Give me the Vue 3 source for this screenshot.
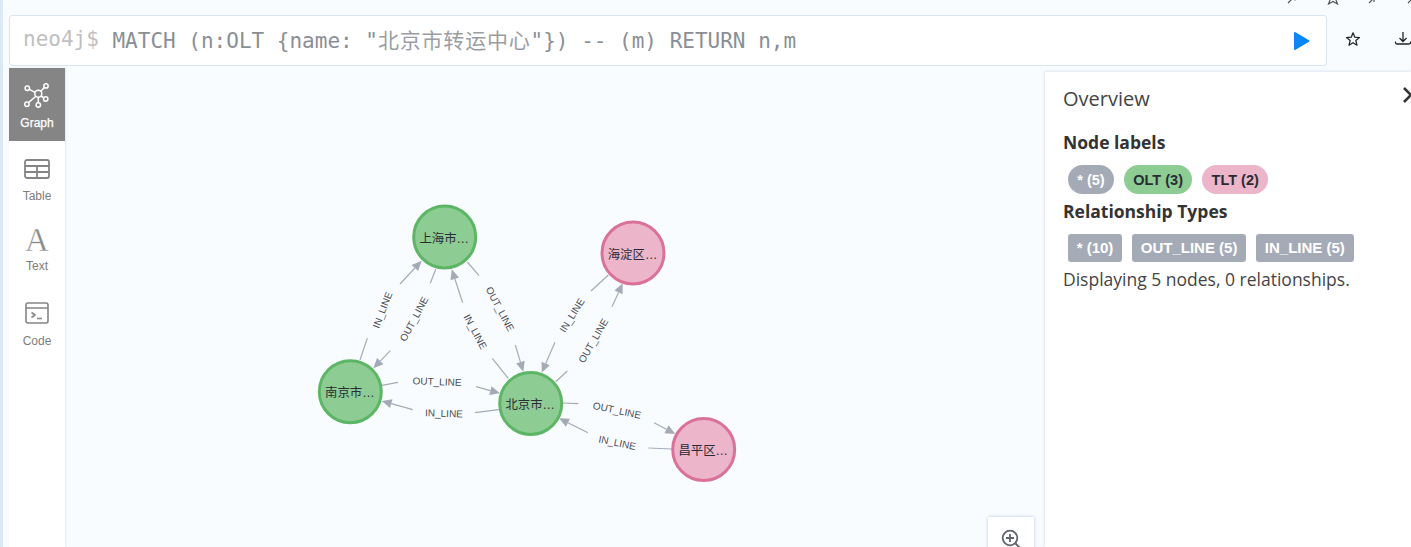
<template>
  <div class="page">
    <div class="corner-icons">
      <svg v-for="(d, i) in cornerIcons" :key="i" width="16" height="16" viewBox="0 0 16 16" :class="'corner-' + i">
        <path :d="d" fill="none" stroke="#555" stroke-width="1.2" />
      </svg>
    </div>

    <div class="top-row">
      <div class="editor">
        <span class="prompt">neo4j$</span>
        <span class="query">MATCH (n:OLT {name: "<span class="cjk">北京市转运中心</span>"}) -- (m) RETURN n,m</span>
        <svg class="run" width="18" height="20" viewBox="0 0 18 20">
          <path d="M2 2 L15.5 10 L2 18 Z" fill="#0b86f5" stroke="#0b86f5" stroke-width="2" stroke-linejoin="round" />
        </svg>
      </div>
      <div class="top-actions">
        <svg width="16" height="16" viewBox="0 0 18 18">
          <path d="M9 2 L11 7 L16.3 7.4 L12.2 10.8 L13.5 16 L9 13.2 L4.5 16 L5.8 10.8 L1.7 7.4 L7 7 Z" fill="none" stroke="#222" stroke-width="1.4" stroke-linejoin="round" />
        </svg>
        <svg width="18" height="16" viewBox="0 0 18 16">
          <path d="M9 1 V10 M5.5 7 L9 10.5 L12.5 7 M1.5 10.5 V11.5 Q1.5 13 3 13 H15 Q16.5 13 16.5 11.5 V10.5" fill="none" stroke="#222" stroke-width="1.3" />
        </svg>
      </div>
    </div>

    <div class="main">
      <nav class="sidebar">
        <div class="tab active">
          <svg width="26" height="26" viewBox="0 0 26 26" fill="none" stroke="#fff" stroke-width="1.5">
            <circle cx="14.3" cy="10.8" r="3.5" />
            <circle cx="3.3" cy="5.3" r="2.2" />
            <circle cx="22" cy="2.9" r="2.2" />
            <circle cx="21.7" cy="16" r="2.2" />
            <circle cx="2.9" cy="21.3" r="2.2" />
            <circle cx="14.3" cy="22" r="2.2" />
            <path d="M5.3 6.3 L11.1 9.3 M20.4 4.5 L16.8 8.3 M20 14.8 L17 13 M4.4 19.6 L11.9 13.3 M14.3 14.3 V19.8" />
          </svg>
          <span>Graph</span>
        </div>
        <div class="tab table-tab">
          <svg width="26" height="20" viewBox="0 0 26 20" fill="none" stroke="#858585" stroke-width="1.8">
            <rect x="1" y="1" width="24" height="18" rx="2" />
            <path d="M1 7 H25 M1 13 H25 M13 7 V19" />
          </svg>
          <span>Table</span>
        </div>
        <div class="tab text-tab">
          <i class="glyph">A</i>
          <span>Text</span>
        </div>
        <div class="tab code-tab">
          <svg width="24" height="22" viewBox="0 0 24 22" fill="none" stroke="#858585" stroke-width="1.6">
            <rect x="1" y="1" width="22" height="20" rx="2" />
            <path d="M1 6 H23 M6.5 10.5 L10 13 L6.5 15.5 M12 16.5 H17" />
          </svg>
          <span>Code</span>
        </div>
      </nav>

      <div class="stage">
        <svg class="graph" viewBox="65 68 1346 479" width="1346" height="479">
          <g v-for="(e, i) in drawnEdges" :key="i">
            <line :x1="e.a[0]" :y1="e.a[1]" :x2="e.b[0]" :y2="e.b[1]" class="edge" />
            <line :x1="e.c[0]" :y1="e.c[1]" :x2="e.d[0]" :y2="e.d[1]" class="edge" />
            <polygon :points="e.head" fill="#a5abb6" />
            <text
              class="edge-label"
              text-anchor="middle"
              dominant-baseline="central"
              :transform="`translate(${e.at[0]} ${e.at[1]}) rotate(${e.rot})`"
            >{{ e.label }}</text>
          </g>
          <g v-for="n in nodes" :key="n.name">
            <circle
              :cx="n.x"
              :cy="n.y"
              r="31"
              stroke-width="3"
              :fill="n.tlt ? '#ecb5c9' : '#8dcc93'"
              :stroke="n.tlt ? '#da7298' : '#5db665'"
            />
            <text class="node-label" :x="n.x - 0.5" :y="n.y + 5.5" text-anchor="middle">{{ n.name }}</text>
          </g>
        </svg>

        <button class="zoom-btn">
          <svg width="22" height="22" viewBox="0 0 22 22" fill="none" stroke="#5f646c" stroke-width="1.8">
            <circle cx="10" cy="10" r="7.3" />
            <path d="M10 6 V14 M6 10 H14 M15.5 15.5 L20 20" />
          </svg>
        </button>

        <aside class="overview">
          <h3 class="title">Overview</h3>
          <svg class="chevron" width="12" height="18" viewBox="0 0 12 18" fill="none" stroke="#333" stroke-width="2.6">
            <path d="M2 2 L9 9 L2 16" />
          </svg>
          <h4>Node labels</h4>
          <div class="chips">
            <span class="chip pill all">* (5)</span>
            <span class="chip pill olt">OLT (3)</span>
            <span class="chip pill tlt">TLT (2)</span>
          </div>
          <h4>Relationship Types</h4>
          <div class="chips rels">
            <span class="chip all">* (10)</span>
            <span class="chip all">OUT_LINE (5)</span>
            <span class="chip all">IN_LINE (5)</span>
          </div>
          <p class="status">Displaying 5 nodes, 0 relationships.</p>
        </aside>
      </div>
    </div>
  </div>
</template>

<script setup>
import { computed } from 'vue'

const nodes = [
  { name: '上海市…', x: 444.7, y: 237 },
  { name: '海淀区…', x: 633, y: 253, tlt: true },
  { name: '南京市…', x: 350.3, y: 391.7 },
  { name: '北京市…', x: 530.7, y: 403.4 },
  { name: '昌平区…', x: 703.7, y: 449.5, tlt: true }
]

// a-b is the line from the source, c-d the line into the arrow tip
const edges = [
  { label: 'IN_LINE', a: [360, 360], b: [367.3, 338.3], c: [400, 284], d: [421.7, 260.7], at: [382.5, 310], rot: -69 },
  { label: 'OUT_LINE', a: [435.7, 269.3], b: [430.3, 283.3], c: [390.3, 350.7], d: [373.3, 368.3], at: [414, 319], rot: -62 },
  { label: 'IN_LINE', a: [508.3, 378.3], b: [492.3, 358.3], c: [462.7, 302.7], d: [451.7, 269.3], at: [475.3, 331.7], rot: 62 },
  { label: 'OUT_LINE', a: [467.3, 262], b: [479, 275.7], c: [515.3, 345], d: [523.3, 371.7], at: [500, 309], rot: 62 },
  { label: 'OUT_LINE', a: [382, 385.3], b: [398, 382.3], c: [476, 386.7], d: [500, 393.3], at: [437, 381.7], rot: 2 },
  { label: 'IN_LINE', a: [498.7, 409.7], b: [475, 412.7], c: [412.7, 409.7], d: [381.7, 401], at: [444, 413.3], rot: 2 },
  { label: 'IN_LINE', a: [608.3, 275], b: [591, 291], c: [555, 342.3], d: [541.7, 372.7], at: [572, 315.3], rot: -58 },
  { label: 'OUT_LINE', a: [555.7, 381.7], b: [567.3, 371], c: [612, 306.7], d: [622.7, 283.3], at: [593.3, 340.7], rot: -60 },
  { label: 'OUT_LINE', a: [562.7, 403], b: [578.3, 403.7], c: [654, 422.7], d: [675.3, 434], at: [617, 410.3], rot: 12 },
  { label: 'IN_LINE', a: [671.7, 449], b: [648.3, 448], c: [588, 432.7], d: [559, 418.3], at: [617.3, 442.7], rot: 12 }
]

const drawnEdges = computed(() =>
  edges.map((e) => {
    const dx = e.d[0] - e.c[0]
    const dy = e.d[1] - e.c[1]
    const len = Math.hypot(dx, dy)
    const ux = dx / len
    const uy = dy / len
    const bx = e.d[0] - ux * 10
    const by = e.d[1] - uy * 10
    const head = [
      [e.d[0], e.d[1]],
      [bx - uy * 4.5, by + ux * 4.5],
      [bx + uy * 4.5, by - ux * 4.5]
    ]
      .map((p) => p.join(','))
      .join(' ')
    return { ...e, head, d: [bx, by] }
  })
)

const cornerIcons = [
  'M3 14 L7 10 M6 4 L12 10 M8 3 L13 8 L10 11 L5 6 Z',
  'M8 2 L10 7 L15 7.4 L11 11 L12.5 15 L8 12.5 L3.5 15 L5 11 L1 7.4 L6 7 Z',
  'M14 2 L9 7 M9 3 V7 H13 M2 14 L7 9 M3 9 H7 V13',
  'M14 2 L9 7 M9 3 V7 H13 M2 14 L7 9 M3 9 H7 V13'
]
</script>

<style>
html,
body {
  margin: 0;
  overflow: hidden;
}
</style>

<style scoped>
.page {
  position: relative;
  box-sizing: border-box;
  width: 1411px;
  height: 547px;
  padding: 15px 0 0 6px;
  overflow: hidden;
  background: #f9fcff;
  border-left: 3px solid #dbe8f5;
  font-family: "Liberation Sans", Arial, sans-serif;
}
.corner-icons {
  position: absolute;
  top: -11px;
  left: 0;
  width: 100%;
}
.corner-icons svg {
  position: absolute;
  top: 0;
}
.corner-0 { left: 1282px; }
.corner-1 { left: 1322px; }
.corner-2 { left: 1364px; }
.corner-3 { left: 1403px; }
.top-row {
  display: flex;
  align-items: center;
}
.editor {
  box-sizing: border-box;
  flex: none;
  display: flex;
  align-items: center;
  width: 1318px;
  height: 51px;
  padding: 0 15px 0 13px;
  background: #fff;
  border: 1px solid #d9e5f1;
  border-radius: 3px;
  font-family: "DejaVu Sans Mono", "Noto Sans CJK SC", monospace;
  font-size: 21px;
  white-space: pre;
}
.prompt {
  color: #c0c0c0;
  margin: 0 13.6px 4px 0;
}
.query {
  flex: 1;
  margin-bottom: 4px;
  color: #8a8f96;
}
.cjk {
  letter-spacing: 0.8px;
  color: #9a9ea4;
}
.run {
  margin-top: 1px;
}
.top-actions {
  flex: none;
  display: flex;
  align-items: center;
  gap: 33px;
  margin: -4px 0 0 18px;
}
.main {
  display: flex;
  margin-top: 2px;
  height: 479px;
}
.sidebar {
  flex: none;
  width: 56px;
  background: #fff;
  box-shadow: 1px 0 2px rgba(200, 210, 235, 0.5);
  z-index: 1;
}
.tab {
  display: flex;
  flex-direction: column;
  align-items: center;
  height: 70px;
  box-sizing: border-box;
  font-size: 12px;
  color: #7d7d7d;
}
.tab.active {
  height: 73px;
  padding-top: 15px;
  background: #858585;
  color: #fff;
}
.tab.active span {
  margin-top: 7px;
  -webkit-text-stroke: 0.25px #fff;
}
.table-tab {
  padding-top: 18px;
}
.table-tab span {
  margin-top: 10px;
}
.text-tab {
  padding-top: 11px;
}
.text-tab span {
  margin-top: 1px;
}
.code-tab {
  padding-top: 21px;
}
.code-tab span {
  margin-top: 10px;
}
.glyph {
  font-family: "Liberation Serif", serif;
  font-style: normal;
  font-size: 33px;
  line-height: 36px;
  color: #8a8a8a;
  -webkit-text-stroke: 0.4px #fff;
}
.stage {
  position: relative;
  flex: 1;
}
.graph {
  display: block;
}
.edge {
  stroke: #a5abb6;
  stroke-width: 1.2;
}
.edge-label {
  font-family: "Liberation Sans", Arial, sans-serif;
  font-size: 10px;
  fill: #4a4c54;
}
.node-label {
  font-family: "Liberation Sans", "Noto Sans CJK SC", sans-serif;
  font-size: 12.4px;
  fill: #2a2c34;
}
.zoom-btn {
  position: absolute;
  left: 923px;
  top: 449px;
  display: flex;
  justify-content: center;
  align-items: flex-start;
  width: 46px;
  height: 46px;
  padding: 11px 0 0;
  background: #fff;
  border: 0;
  box-shadow: 0 0 3px rgba(170, 185, 215, 0.8);
}
.overview {
  position: absolute;
  top: 4px;
  right: 0;
  bottom: 0;
  width: 366px;
  box-sizing: border-box;
  padding: 13px 18px;
  background: #fff;
  box-shadow: 0 0 3px rgba(180, 195, 220, 0.7);
  font-family: "Open Sans", sans-serif;
  color: #444;
}
.title {
  margin: 0 0 18px;
  font-size: 20px;
  line-height: 27px;
  font-weight: 400;
}
.chevron {
  position: absolute;
  top: 14px;
  right: -3px;
}
h4 {
  margin: 0 0 11px;
  font-size: 17.5px;
  line-height: 24px;
  font-weight: 700;
  color: #333;
}
.chips {
  display: flex;
  gap: 10px;
  margin: 0 0 5px 5px;
}
.chip {
  display: flex;
  align-items: center;
  height: 28px;
  padding: 0 8.7px 2px;
  box-sizing: border-box;
  background: #a5abb6;
  color: #fff;
  border-radius: 3px;
  font-family: "Liberation Sans", Arial, sans-serif;
  font-size: 15px;
  font-weight: 700;
}
.chip.pill {
  height: 29px;
  padding: 0 9.3px;
  border-radius: 15px;
  font-size: 14.5px;
}
.chip.olt {
  background: #8dcc93;
  color: #2a2c34;
}
.chip.tlt {
  background: #ecb5c9;
  color: #2a2c34;
}
.status {
  margin: 0;
  font-size: 17.5px;
  line-height: 24px;
}
</style>
